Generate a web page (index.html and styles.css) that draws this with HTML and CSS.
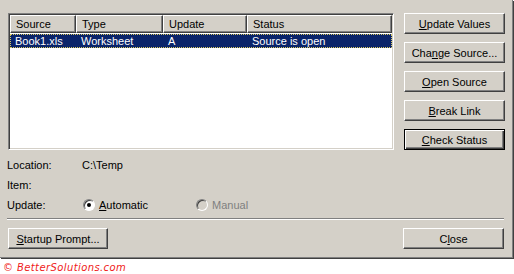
FILE: index.html
```html
<!DOCTYPE html>
<html>
  <head>
    <title>Edit Links</title>
    <link rel="stylesheet" href="styles.css">
  </head>
  <body>
    <div class="dialog">
      <div class="top">
        <div class="list">
          <div class="list-header">
            <div class="col col-source">Source</div>
            <div class="col col-type">Type</div>
            <div class="col col-update">Update</div>
            <div class="col col-status">Status</div>
          </div>
          <div class="list-row selected">
            <div class="cell col-source">Book1.xls</div>
            <div class="cell col-type">Worksheet</div>
            <div class="cell col-update">A</div>
            <div class="cell col-status">Source is open</div>
          </div>
        </div>
        <div class="side-buttons">
          <button class="btn"><u>U</u>pdate Values</button>
          <button class="btn">Cha<u>n</u>ge Source...</button>
          <button class="btn"><u>O</u>pen Source</button>
          <button class="btn"><u>B</u>reak Link</button>
          <button class="btn btn-default"><u>C</u>heck Status</button>
        </div>
      </div>

      <div class="info">
        <div class="info-row">
          <span class="info-label">Location:</span>
          <span class="info-value">C:\Temp</span>
        </div>
        <div class="info-row">
          <span class="info-label">Item:</span>
        </div>
        <div class="info-row">
          <span class="info-label">Update:</span>
          <span class="radio checked"><span class="dot"></span><span><u>A</u>utomatic</span></span>
          <span class="radio disabled"><span class="dot"></span><span>Manual</span></span>
        </div>
      </div>

      <div class="separator"></div>

      <div class="bottom">
        <button class="btn btn-wide"><u>S</u>tartup Prompt...</button>
        <button class="btn">C<u>l</u>ose</button>
      </div>
    </div>
    <div class="credit">© BetterSolutions.com</div>
  </body>
</html>
```

FILE: styles.css
```css
body {
  margin: 0;
  background: #fff;
  font-family: "Liberation Sans", Arial, sans-serif;
  font-size: 11px;
  color: #000;
}

.dialog {
  width: 512px;
  height: 257px;
  background: #d4d0c8;
  border-right: 1px solid #808080;
  border-bottom: 1px solid #808080;
  box-shadow: 1px 1px 0 #404040;
}

.top {
  display: flex;
  padding: 13px 0 0 8px;
}

/* list view */
.list {
  width: 382px;
  height: 133px;
  background: #fff;
  border: 1px solid;
  border-color: #808080 #fff #fff #808080;
  box-shadow: inset 1px 1px 0 #404040, inset -1px -1px 0 #d4d0c8;
  padding: 1px;
}

.list-header {
  display: flex;
  height: 18px;
}

.list-header .col {
  box-sizing: border-box;
  background: #d4d0c8;
  border: 1px solid;
  border-color: #fff #404040 #404040 #fff;
  box-shadow: inset -1px -1px 0 #808080;
  padding: 2px 0 0 5px;
  line-height: 13px;
}

.col-source { width: 66px; }
.col-type { width: 87px; }
.col-update { width: 84px; }
.col-status { width: 145px; }

.list-row {
  display: flex;
  height: 14px;
  margin-top: 1px;
  line-height: 14px;
}

.list-row.selected {
  background: #0a246a;
  color: #fff;
  outline: 1px dotted #d8c860;
  outline-offset: -1px;
}

.cell {
  padding-left: 5px;
  box-sizing: border-box;
}

.side-buttons {
  display: flex;
  flex-direction: column;
  gap: 8px;
  margin-left: 10px;
}

/* classic buttons */
.btn {
  box-sizing: border-box;
  width: 101px;
  height: 21px;
  background: #d4d0c8;
  border: 1px solid;
  border-color: #fff #404040 #404040 #fff;
  box-shadow: inset -1px -1px 0 #808080;
  font-family: inherit;
  font-size: 11px;
  color: #000;
  padding: 0;
  margin: 0;
}

.btn-default {
  border: 1px solid #000;
  box-shadow: inset 1px 1px 0 #fff, inset -1px -1px 0 #404040, inset -2px -2px 0 #808080;
}

.btn-wide {
  width: 100px;
}

.info {
  padding: 5px 0 0 7px;
}

.info-row {
  display: flex;
  align-items: center;
  height: 20px;
}

.info-label {
  width: 75px;
}

.radio {
  display: flex;
  align-items: center;
  gap: 4px;
}

.radio .dot {
  width: 10px;
  height: 10px;
  border-radius: 50%;
  background: #fff;
  border: 1px solid;
  border-color: #808080 #fff #fff #808080;
  box-shadow: inset 1px 1px 0 #404040;
  position: relative;
  margin-left: 1px;
}

.radio.checked {
  width: 113px;
}

.radio.checked .dot::after {
  content: "";
  position: absolute;
  left: 3px;
  top: 3px;
  width: 4px;
  height: 4px;
  border-radius: 50%;
  background: #000;
}

.radio.disabled {
  color: #808080;
}

.radio.disabled .dot {
  background: #d4d0c8;
}

.separator {
  margin: 3px 8px 0 7px;
  border-top: 1px solid #808080;
  border-bottom: 1px solid #fff;
}

.bottom {
  display: flex;
  justify-content: space-between;
  padding: 8px 8px 0 8px;
}

.credit {
  margin: 4px 0 0 3px;
  color: #f02020;
  font-family: "DejaVu Sans", Verdana, sans-serif;
  font-style: italic;
  font-size: 10px;
  letter-spacing: 0.4px;
}
```
